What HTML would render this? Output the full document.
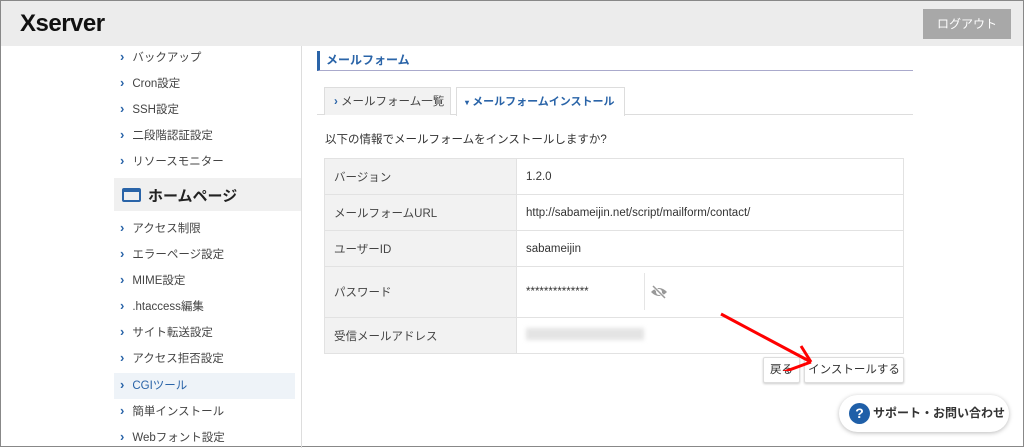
<!DOCTYPE html><html><head><meta charset="utf-8"><style>
*{box-sizing:border-box;margin:0;padding:0}
body{width:1024px;height:447px;overflow:hidden;background:#fff;font-family:"Liberation Sans","Noto Sans CJK JP",sans-serif;color:#333;position:relative;border:1px solid #888}
.hd{position:absolute;left:0;top:0;width:1022px;height:45px;background:#ececec}
.logo{position:absolute;left:19px;top:9px;font-size:24px;font-weight:bold;color:#111;letter-spacing:-0.5px}
.lo{position:absolute;left:922px;top:8px;width:88px;height:30px;background:#a8a8a8;color:#fff;font-size:12px;text-align:center;line-height:30px}
.sb{position:absolute;left:113px;top:45px;width:188px;height:402px;border-right:1px solid #ddd}
.it{position:absolute;left:6px;font-size:11.5px;color:#444;white-space:nowrap}
.it:before{content:"›";color:#2a64a8;font-weight:bold;margin-right:8px;font-size:13px}
.sec{position:absolute;left:0;top:132px;width:187px;height:33px;background:#f0f0f0}
.sec span{position:absolute;left:34px;top:7px;font-size:15px;font-weight:bold;color:#222}
.sec i{position:absolute;left:8px;top:10px;width:19px;height:14px;border:2px solid #2a64a8;border-top-width:4px;border-radius:2px}
.cgi{position:absolute;left:0;top:327px;width:181px;height:26px;background:#eef3f8}
.ttl{position:absolute;left:316px;top:50px;width:596px;height:20px;border-left:3px solid #2a64a8;border-bottom:1px solid #aac;font-size:12px;font-weight:bold;color:#2a64a8;padding-left:6px;line-height:18px}
.tabs{position:absolute;left:316px;top:113px;width:596px;border-bottom:1px solid #ddd}
.tab{position:absolute;top:86px;height:28px;font-size:11.5px;line-height:28px;padding-left:9px;border:1px solid #ddd;border-bottom:none;white-space:nowrap}
p.m{position:absolute;left:324px;top:130px;font-size:11.5px;color:#333}
table{position:absolute;left:323px;top:157px;width:580px;border-collapse:collapse;font-size:11.5px}
td{border:1px solid #e2e2e2;padding-left:9px;color:#333}
td.l{width:192px;background:#f2f2f2;color:#444}
.btn{position:absolute;top:356px;height:26px;border:1px solid #ddd;border-radius:2px;box-shadow:0 1px 2px #ccc;font-size:11.5px;line-height:24px;text-align:center;background:#fff;white-space:nowrap}
.sup{position:absolute;left:838px;top:394px;width:170px;height:37px;border-radius:19px;background:#fff;box-shadow:0 1px 5px #bbb;font-size:12px;font-weight:bold;line-height:37px;padding-left:34px;white-space:nowrap}
.sup b{position:absolute;left:10px;top:8px;width:21px;height:21px;border-radius:50%;background:#1f5fa8;color:#fff;line-height:21px;text-align:center;font-size:14px;padding:0}
</style></head><body>
<div class="hd"><div class="logo">Xserver</div><div class="lo">ログアウト</div></div>
<div class="sb">
<div class="it" style="top:3px">バックアップ</div>
<div class="it" style="top:29px">Cron設定</div>
<div class="it" style="top:55px">SSH設定</div>
<div class="it" style="top:81px">二段階認証設定</div>
<div class="it" style="top:107px">リソースモニター</div>
<div class="sec"><i></i><span>ホームページ</span></div>
<div class="it" style="top:174px">アクセス制限</div>
<div class="it" style="top:200px">エラーページ設定</div>
<div class="it" style="top:226px">MIME設定</div>
<div class="it" style="top:252px">.htaccess編集</div>
<div class="it" style="top:278px">サイト転送設定</div>
<div class="it" style="top:304px">アクセス拒否設定</div>
<div class="cgi"></div>
<div class="it" style="top:331px;color:#2a64a8">CGIツール</div>
<div class="it" style="top:357px">簡単インストール</div>
<div class="it" style="top:383px">Webフォント設定</div>
</div>
<div class="ttl">メールフォーム</div>
<div class="tabs"></div>
<div class="tab" style="left:323px;width:127px;background:#f2f2f2;color:#444"><span style="color:#2a64a8;font-weight:bold">›</span> メールフォーム一覧</div>
<div class="tab" style="left:455px;width:169px;height:29px;background:#fff;color:#2a64a8;font-weight:bold;font-size:11px;padding-left:8px"><span style="font-size:8px">▾</span> メールフォームインストール</div>
<p class="m">以下の情報でメールフォームをインストールしますか?</p>
<table>
<tr style="height:36px"><td class="l">バージョン</td><td>1.2.0</td></tr>
<tr style="height:36px"><td class="l">メールフォームURL</td><td>http://sabameijin.net/script/mailform/contact/</td></tr>
<tr style="height:36px"><td class="l">ユーザーID</td><td>sabameijin</td></tr>
<tr style="height:51px"><td class="l">パスワード</td><td style="position:relative">**************<span style="position:absolute;left:127px;top:6px;height:37px;border-left:1px solid #e5e5e5"></span><svg style="position:absolute;left:133px;top:17px" width="18" height="16" viewBox="0 0 18 16"><path d="M1 8Q9 0 17 8Q9 16 1 8Z" fill="#999"/><circle cx="9" cy="8" r="3" fill="#fff"/><path d="M3 2L15 14" stroke="#fff" stroke-width="3"/><path d="M3 2L15 14" stroke="#999" stroke-width="1.5"/></svg></td></tr>
<tr style="height:36px"><td class="l">受信メールアドレス</td><td><span style="display:inline-block;width:118px;height:12px;background:#e4e4e4;filter:blur(2px)"></span></td></tr>
</table>
<div class="btn" style="left:762px;width:37px">戻る</div>
<div class="btn" style="left:803px;width:100px">インストールする</div>
<svg style="position:absolute;left:700px;top:300px" width="120" height="70"><path d="M20 13L110 61M100 45L110 61M80 72L110 61" stroke="#f00" stroke-width="3" fill="none"/></svg>
<div class="sup"><b>?</b>サポート・お問い合わせ</div>
</body></html>
